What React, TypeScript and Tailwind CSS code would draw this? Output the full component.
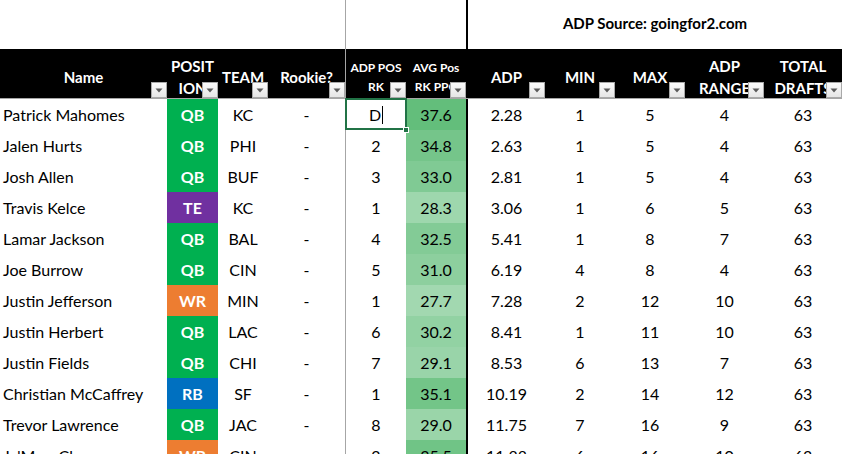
import React from "react";

type Row = [string, string, string, string, string, number, string, number, number, number, number];

const rows: Row[] = [
  ["Patrick Mahomes", "QB", "KC", "-", "D", 37.6, "2.28", 1, 5, 4, 63],
  ["Jalen Hurts", "QB", "PHI", "-", "2", 34.8, "2.63", 1, 5, 4, 63],
  ["Josh Allen", "QB", "BUF", "-", "3", 33.0, "2.81", 1, 5, 4, 63],
  ["Travis Kelce", "TE", "KC", "-", "1", 28.3, "3.06", 1, 6, 5, 63],
  ["Lamar Jackson", "QB", "BAL", "-", "4", 32.5, "5.41", 1, 8, 7, 63],
  ["Joe Burrow", "QB", "CIN", "-", "5", 31.0, "6.19", 4, 8, 4, 63],
  ["Justin Jefferson", "WR", "MIN", "-", "1", 27.7, "7.28", 2, 12, 10, 63],
  ["Justin Herbert", "QB", "LAC", "-", "6", 30.2, "8.41", 1, 11, 10, 63],
  ["Justin Fields", "QB", "CHI", "-", "7", 29.1, "8.53", 6, 13, 7, 63],
  ["Christian McCaffrey", "RB", "SF", "-", "1", 35.1, "10.19", 2, 14, 12, 63],
  ["Trevor Lawrence", "QB", "JAC", "-", "8", 29.0, "11.75", 7, 16, 9, 63],
  ["Ja'Marr Chase", "WR", "CIN", "-", "2", 35.5, "11.88", 6, 16, 10, 63],
];

const posColor: Record<string, string> = {
  QB: "bg-[#00b050]",
  TE: "bg-[#7030a0]",
  WR: "bg-[#ed7d31]",
  RB: "bg-[#0070c0]",
};

// colour scale white -> excel green
function scale(v: number) {
  const t = Math.max(0, Math.min(1, (v - 13) / (37.6 - 13)));
  const mix = (a: number, b: number) => Math.round(a + (b - a) * t);
  return `rgb(${mix(255, 99)}, ${mix(255, 190)}, ${mix(255, 123)})`;
}

const grid =
  "grid grid-cols-[167px_51px_50px_77px_61px_60px_79px_70px_70px_79px_78px]";

function Filter() {
  return (
    <div className="absolute bottom-0 right-0 flex h-4 w-4 items-center justify-center border border-[#a9a9a9] bg-gradient-to-b from-[#fbfbfb] to-[#e6e6e6]">
      <svg width="8" height="5" viewBox="0 0 8 5">
        <path d="M0.5 0.5 L7.5 0.5 L4 4.5 Z" fill="#5a5a5a" />
      </svg>
    </div>
  );
}

function Head({ lines, small, cls = "" }: { lines: string[]; small?: boolean; cls?: string }) {
  return (
    <div
      className={`relative flex h-[49px] flex-col items-center justify-center overflow-hidden whitespace-nowrap pt-[6px] text-center font-bold text-white ${
        small ? "text-[12px] leading-[19px]" : "text-[15px] leading-[22px]"
      } ${cls}`}
    >
      {lines.map((l) => (
        <span key={l}>{l}</span>
      ))}
      <Filter />
    </div>
  );
}

export default function App() {
  return (
    <div className="h-[454px] w-[842px] overflow-hidden bg-white font-['Lato','Liberation_Sans',sans-serif] text-black">
      {/* top strip */}
      <div className="flex h-[49px]">
        <div className="w-[345px]" />
        <div className="w-[121px] border-l border-[#a6a6a6]" />
        <div className="flex flex-1 items-center justify-center border-l-2 border-black pb-[3px] text-[15px] font-bold">
          ADP Source: goingfor2.com
        </div>
      </div>

      {/* header */}
      <div className={`${grid} border-b border-[#a6a6a6] bg-black`}>
        <Head lines={["Name"]} />
        <Head lines={["POSIT", "ION"]} />
        <Head lines={["TEAM"]} />
        <Head lines={["Rookie?"]} />
        <Head lines={["ADP POS", "RK"]} small cls="border-l border-[#a6a6a6]" />
        <Head lines={["AVG Pos", "RK PPG"]} small />
        <Head lines={["ADP"]} cls="border-l-2 border-black" />
        <Head lines={["MIN"]} />
        <Head lines={["MAX"]} />
        <Head lines={["ADP", "RANGE"]} />
        <Head lines={["TOTAL", "DRAFTS"]} />
      </div>

      {/* body */}
      <div className="text-[16px]">
        {rows.map((r, i) => (
          <div key={r[0]} className={`${grid} h-[31px]`}>
            <div className="flex items-center whitespace-nowrap pl-[3px]">{r[0]}</div>
            <div className={`flex items-center justify-center font-bold text-white ${posColor[r[1]]}`}>
              {r[1]}
            </div>
            <div className="flex items-center justify-center">{r[2]}</div>
            <div className="flex items-center justify-center">{r[3]}</div>
            <div className="relative flex items-center justify-center border-l border-[#a6a6a6]">
              {i === 0 ? (
                <>
                  <span>{r[4]}</span>
                  <span className="ml-px h-[18px] w-px bg-black" />
                  <div className="absolute -left-px -top-px bottom-0 -right-px border-2 border-[#217346]" />
                  <div className="absolute -bottom-[3px] -right-[3px] h-[6px] w-[6px] border border-white bg-[#217346]" />
                </>
              ) : (
                r[4]
              )}
            </div>
            <div className="flex items-center justify-center" style={{ backgroundColor: scale(r[5]) }}>
              {r[5].toFixed(1)}
            </div>
            <div className="flex items-center justify-center border-l-2 border-black">{r[6]}</div>
            <div className="flex items-center justify-center">{r[7]}</div>
            <div className="flex items-center justify-center">{r[8]}</div>
            <div className="flex items-center justify-center">{r[9]}</div>
            <div className="flex items-center justify-center">{r[10]}</div>
          </div>
        ))}
      </div>
    </div>
  );
}
